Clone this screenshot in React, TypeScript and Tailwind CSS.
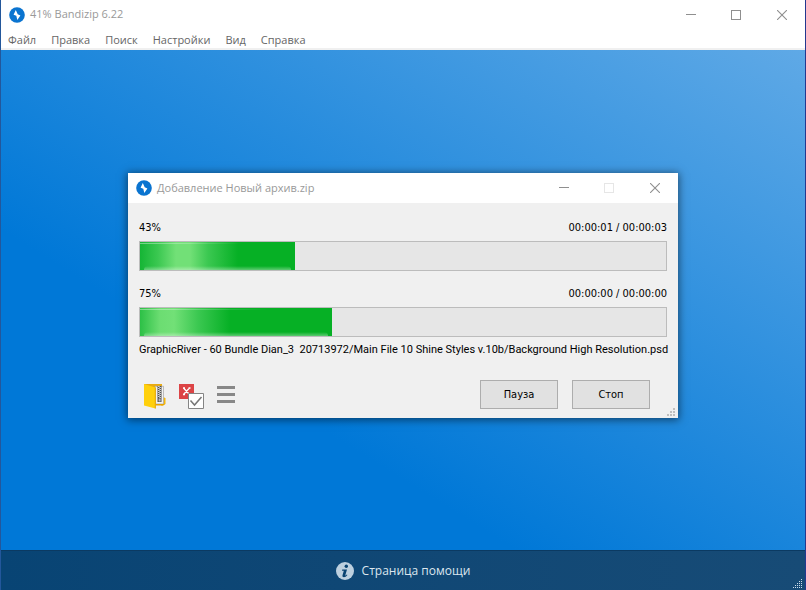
import { clsx } from "clsx";

const MENU = ["Файл", "Правка", "Поиск", "Настройки", "Вид", "Справка"];

interface Progress {
  id: string;
  label: string;
  time: string;
  width: number;
  glow: string;
}

const PROGRESS: Progress[] = [
  {
    id: "file",
    label: "43%",
    time: "00:00:01 / 00:00:03",
    width: 29.5,
    glow: "bg-[linear-gradient(90deg,#15b535_0px,#3bc851_18px,#72e077_36px,#72e077_50px,#3bc851_68px,#06b025_98px)]",
  },
  {
    id: "total",
    label: "75%",
    time: "00:00:00 / 00:00:00",
    width: 36.5,
    glow: "bg-[linear-gradient(90deg,#2cc046_0px,#6cdd72_20px,#72e077_34px,#3bc851_58px,#06b025_90px)]",
  },
];

function Logo() {
  return (
    <svg viewBox="0 0 16 16" className="size-4 shrink-0" aria-hidden="true">
      <circle cx="8" cy="8" r="7.8" fill="#0a74d0" />
      <path d="M6.8 3 4.600 7.700l2.700 1.100 1 4.200 3.100-4.600-2.700-1.100z" fill="#fff" />
    </svg>
  );
}

function CaptionButtons({ maximizeDisabled = false }: { maximizeDisabled?: boolean }) {
  return (
    <div className="flex h-full text-[#8f8f8f]">
      <button type="button" aria-label="Свернуть" className="flex w-[45px] items-center justify-center">
        <svg viewBox="0 0 10 10" className="size-[10px]" shapeRendering="crispEdges">
          <path d="M0 4h10v1H0z" fill="currentColor" />
        </svg>
      </button>
      <button
        type="button"
        aria-label="Развернуть"
        disabled={maximizeDisabled}
        className={clsx("flex w-[45px] items-center justify-center", maximizeDisabled && "text-[#e6e6e6]")}
      >
        <svg viewBox="0 0 10 10" className="size-[10px]" fill="none" stroke="currentColor" shapeRendering="crispEdges">
          <path d="M.5.5h9v9h-9z" />
        </svg>
      </button>
      <button type="button" aria-label="Закрыть" className="flex w-[47px] items-center justify-center">
        <svg viewBox="0 0 10 10" className="size-[10px]" fill="none" stroke="currentColor">
          <path d="M0 0l10 10M10 0 0 10" strokeWidth="1.1" />
        </svg>
      </button>
    </div>
  );
}

function ProgressRow({ item }: { item: Progress }) {
  return (
    <div>
      <div className="flex justify-between leading-[18px]">
        <span id={item.id}>{item.label}</span>
        <span>{item.time}</span>
      </div>
      <div
        role="progressbar"
        aria-labelledby={item.id}
        className="mt-1 h-[30px] border border-[#bcbcbc] bg-[#e6e6e6]"
      >
        <div
          className={clsx("relative h-full overflow-hidden bg-[#06b025]", item.glow)}
          style={{ width: `${item.width}%` }}
        >
          {/* top and bottom shine */}
          <div className="absolute top-px left-0 h-px w-2/3 bg-linear-to-r from-white/40 to-transparent" />
          <div className="absolute inset-x-1 bottom-0 h-1 rounded-t-full bg-linear-to-t from-white/35 to-transparent" />
        </div>
      </div>
    </div>
  );
}

function FolderIcon() {
  return (
    <svg viewBox="0 0 24 26" className="h-[26px] w-6">
      <path d="M1 1h18v6H1z" fill="#e9ab10" />
      <path d="M19 14.500h2.500l1 1V21L20 22.500h-2z" fill="#f5b80c" />
      <path d="M12 3.300h8.500V21H12z" fill="#f2f2f2" stroke="#a5a5a5" strokeWidth=".7" />
      <path d="M14.500 3h4v16h-4z" fill="#505050" />
      <path d="M15.900 3v12" stroke="#fff" strokeWidth="1.200" strokeDasharray="1 1" />
      <path d="M17.100 4v12" stroke="#fff" strokeWidth="1.200" strokeDasharray="1 1" />
      <path d="M15.600 15.500h2v3h-2z" fill="#bbb" />
      <path d="M12.500 21h9.500l-2 1.500h-7.500z" fill="#e9a400" />
      <path d="M1 1l11.500 3.500v21L1 22.500z" fill="#ffd00c" />
      <path d="M12.300 4.500v21" stroke="#e5a400" />
    </svg>
  );
}

function CheckIcon() {
  return (
    <svg viewBox="0 0 26 26" className="size-[26px]" fill="none">
      <path d="M0 1h15v15H0z" fill="#dc4446" />
      <path d="M4.500 5l6 6.500M10.500 5l-6 6.500M4 5h2M9.500 5h2M4 11.500h2M9.500 11.500h2" stroke="#fff" strokeWidth="1.300" />
      <path d="M9.500 10.500h15v15h-15z" fill="#fff" stroke="#858585" />
      <path d="M11.500 17.500l4 4.500 7-8" stroke="#777" strokeWidth="1.500" />
    </svg>
  );
}

function Grip({ className }: { className: string }) {
  return (
    <svg viewBox="0 0 8 8" className={clsx("size-2", className)} fill="currentColor" shapeRendering="crispEdges">
      <path d="M6 0h2v2H6zM3 3h2v2H3zM6 3h2v2H6zM0 6h2v2H0zM3 6h2v2H3zM6 6h2v2H6z" />
    </svg>
  );
}

function WindowGrip() {
  return (
    <svg viewBox="0 0 10 10" className="absolute right-[2px] bottom-[1px] size-[10px]" shapeRendering="crispEdges">
      <path
        d="M8 0h1v1H8zM6 2h1v1H6zM8 2h1v1H8zM4 4h1v1H4zM6 4h1v1H6zM8 4h1v1H8zM2 6h1v1H2zM4 6h1v1H4zM6 6h1v1H6zM8 6h1v1H8zM0 8h1v1H0zM2 8h1v1H2zM4 8h1v1H4zM6 8h1v1H6zM8 8h1v1H8z"
        fill="#c9dbea"
      />
    </svg>
  );
}

function ArchiveDialog() {
  return (
    <section
      role="dialog"
      aria-labelledby="dialog-title"
      className="relative w-full max-w-[550px] bg-[#f0f0f0] font-['DejaVu_Sans_Condensed','DejaVu_Sans',sans-serif] text-[11px] text-black shadow-[0_1px_8px_1px_rgba(0,0,0,0.5)]"
    >
      <header className="flex h-[30px] items-center justify-between bg-white pl-2 font-['Open_Sans',sans-serif] text-[#999]">
        <div className="flex items-center gap-[5px]">
          <Logo />
          <h2 id="dialog-title">Добавление Новый архив.zip</h2>
        </div>
        <CaptionButtons maximizeDisabled />
      </header>
      <div className="px-[11px] pt-4 pb-[9px]">
        <div className="flex flex-col gap-[14px]">
          {PROGRESS.map((item) => (
            <ProgressRow key={item.id} item={item} />
          ))}
        </div>
        <p className="mt-1 font-[Roboto,sans-serif] leading-[18px] whitespace-pre">
          {"GraphicRiver - 60 Bundle Dian_3  20713972/Main File 10 Shine Styles v.10b/Background High Resolution.psd"}
        </p>
        <div className="mt-[21px] flex items-center justify-between pr-[17px] pl-1">
          <div className="flex h-[29px] items-center gap-3">
            <button type="button" aria-label="Открыть папку" className="mt-[3px]">
              <FolderIcon />
            </button>
            <button type="button" aria-label="Параметры завершения" className="mt-[3px]">
              <CheckIcon />
            </button>
            <button type="button" aria-label="Меню">
              <svg viewBox="0 0 18 18" className="size-[18px]" fill="#888" shapeRendering="crispEdges">
                <path d="M0 0h18v3H0zM0 7h18v3H0zM0 14h18v3H0z" />
              </svg>
            </button>
          </div>
          <div className="flex gap-[14px]">
            <button type="button" className="h-[29px] w-[78px] border border-[#adadad] bg-[#e1e1e1] pt-[2px]">
              Пауза
            </button>
            <button type="button" className="h-[29px] w-[78px] border border-[#adadad] bg-[#e1e1e1] pt-[2px]">
              Стоп
            </button>
          </div>
        </div>
      </div>
      <Grip className="absolute right-[3px] bottom-[2px] text-[#bfbfbf]" />
    </section>
  );
}

export default function App() {
  return (
    <div className="relative flex min-h-screen flex-col border-r border-l border-r-[#23388f] border-l-[#23579b] bg-white font-['Open_Sans',sans-serif] text-[11px]">
      <header className="flex h-[29px] items-center justify-between pl-2 text-[#999]">
        <div className="flex items-center gap-[5px]">
          <Logo />
          <h1>41% Bandizip 6.22</h1>
        </div>
        <CaptionButtons />
      </header>
      <nav className="flex h-[21px] items-center gap-[15px] border-b-2 border-[#f0f0f0] pt-[3px] pl-[7px] text-[#666]">
        {MENU.map((name) => (
          <button key={name} type="button">
            {name}
          </button>
        ))}
      </nav>
      <main className="flex-1 bg-[linear-gradient(to_top_right,#0078d7_32%,#5fa9e6)]" />
      <footer className="relative flex h-10 items-center justify-center border-t border-[#0b3a62] bg-linear-to-r from-[#084474] to-[#174b76]">
        <a href="#help" className="flex items-center gap-2 text-xs text-[#dce6ee]">
          <svg viewBox="0 0 18 18" className="size-[18px]">
            <circle cx="9" cy="9" r="9" fill="#bdd0df" />
            <circle cx="10.300" cy="4.200" r="1.700" fill="#0a4371" />
            <path
              d="M6.200 7.500h4.800l-1.700 5.700c-.1.500.3.500.7.100l.8-.8.6.5c-1.200 1.500-2.300 2.200-3.400 2.200-1.300 0-1.800-.8-1.500-2l1.300-4.500H6z"
              fill="#0a4371"
            />
          </svg>
          Страница помощи
        </a>
        <WindowGrip />
      </footer>
      <div className="absolute inset-0 flex items-center justify-center pt-px">
        <ArchiveDialog />
      </div>
    </div>
  );
}
